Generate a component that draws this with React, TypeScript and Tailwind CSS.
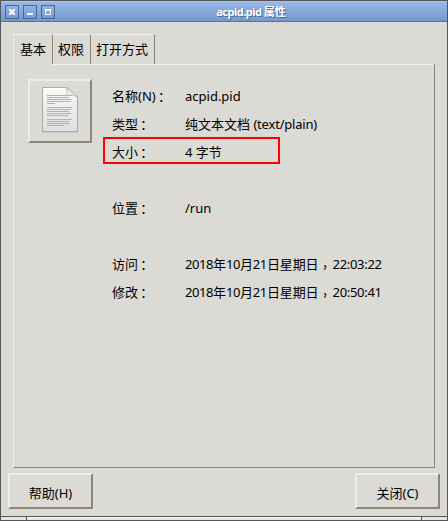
import type { ReactNode } from "react";

const cn = "font-['Noto_Sans','Noto_Sans_CJK_SC',sans-serif]";

function TitleButton({ children }: { children: ReactNode }) {
  return (
    <button className="flex h-[14px] w-[14px] items-center justify-center border border-[#46699a] bg-gradient-to-b from-[#94b4e2] to-[#7599cf]">
      <svg width="8" height="8" viewBox="0 0 8 8" fill="#f4f7fb" shapeRendering="crispEdges">
        {children}
      </svg>
    </button>
  );
}

function Row({ label, children }: { label: string; children?: ReactNode }) {
  return (
    <div className="flex h-7 items-center whitespace-nowrap">
      <span className="w-[73px] shrink-0">
        {label}
        {label && (
          <span lang="zh-TW" className="-ml-px inline-block translate-y-px font-['Noto_Sans_CJK_TC',sans-serif] leading-none">：</span>
        )}
      </span>
      <span>{children}</span>
    </div>
  );
}

function Stamp({ date, time }: { date: string; time: string }) {
  return (
    <span className="tracking-[-0.43px]">
      {date.split(/(\d+)/).map((part, i) => (
        <span key={i} className={i % 2 ? "" : "tracking-[-0.1px]"}>{part}</span>
      ))}
      <span lang="zh-TW" className="mr-px inline-block translate-y-[3px] font-['Noto_Sans_CJK_TC',sans-serif] leading-none tracking-normal">，</span>
      <span className="tracking-[-0.3px]">{time}</span>
    </span>
  );
}

function Raised({ className, children }: { className: string; children: ReactNode }) {
  return (
    <button
      className={`flex items-center justify-center border-2 border-t-[#edede9] border-l-[#edede9] border-r-[#8a8678] border-b-[#8a8678] ${className}`}
    >
      {children}
    </button>
  );
}

function DocumentIcon() {
  const lines = [
    [8, 25], [10, 22], [12, 25], [14, 24], [16, 8],
    [20, 25], [22, 24], [24, 22], [26, 24], [28, 21],
    [32, 25], [34, 22], [36, 23], [38, 17],
  ];
  return (
    <svg width="38" height="48" viewBox="0 0 38 48">
      <defs>
        <linearGradient id="paper" x1="0" y1="0" x2="0" y2="1">
          <stop offset="0" stopColor="#fafafa" />
          <stop offset="1" stopColor="#dedede" />
        </linearGradient>
        <linearGradient id="fold" x1="0" y1="1" x2="1" y2="0">
          <stop offset="0" stopColor="#c8c8c8" />
          <stop offset="0.3" stopColor="#ffffff" />
          <stop offset="0.55" stopColor="#d0d0d0" />
        </linearGradient>
      </defs>
      <path d="M.5 45.2H37.5" stroke="#c6c6c1" strokeWidth="1" />
      <path d="M1.5 .5H25.5L36.5 10V44.5H1.5Z" fill="url(#paper)" stroke="#aaaaaa" />
      <path d="M2.5 1.5H24" stroke="#fff" />
      <g fill="#b2b2b2">
        {lines.map(([y, w]) => (
          <rect key={y} x="6" y={y} width={w} height="1" />
        ))}
      </g>
      <path d="M24.5 .5C26.5 3 26.5 6 25.5 8.5C29 7.6 33 8 36.5 10C34 6 29 1.5 24.5 .5Z" fill="url(#fold)" stroke="#b5b5b5" strokeWidth=".8" />
    </svg>
  );
}

export default function App() {
  return (
    <div className={`flex h-[521px] w-[448px] flex-col overflow-hidden border border-[#55565a] bg-[#dbdad5] text-[13px] leading-[18px] text-black ${cn}`}>
      <header className="relative flex h-[21px] shrink-0 items-center gap-1 border-t border-b border-t-[#a9c3ea] border-b-[#4e74a8] bg-gradient-to-b from-[#98b8e6] to-[#7599cc] pl-1">
        <TitleButton>
          <path d="M1 1h2v1h2V1h2v2H6v2h1v2H5V6H3v1H1V5h1V3H1z" />
        </TitleButton>
        <TitleButton>
          <path d="M1 5h6v2H1z" />
        </TitleButton>
        <TitleButton>
          <path fillRule="evenodd" d="M1 1h6v6H1zM2 3v3h4V3z" />
        </TitleButton>
        <h1 className="absolute inset-x-0 top-0 pl-[54px] text-center text-[11px] leading-[19px] font-bold text-white [text-shadow:1px_1px_0_#48689a]">
          <span className="tracking-[-0.5px]">acpid.pid </span>属性
        </h1>
      </header>

      <nav className="mt-3 ml-3 flex h-[30px] shrink-0">
        <div className="w-10 border-t border-r border-l border-t-[#efefeb] border-r-[#8a8678] border-l-[#efefeb] pt-[5px] pl-[6px]">基本</div>
        <div className="w-[38px] border-t border-r border-t-[#efefeb] border-r-[#8a8678] pt-[5px] pl-[5px]">权限</div>
        <div className="w-16 border-t border-r border-t-[#efefeb] border-r-[#8a8678] pt-[5px] pl-[5px]">打开方式</div>
      </nav>

      <main className="mx-3 h-[404px] w-[422px] shrink-0 border-r border-b border-l border-r-[#8a8678] border-b-[#8a8678] border-l-[#efefeb]">
        <div className="ml-[38px] h-px bg-[#efefeb]" />
        <div className="flex">
          <Raised className="mt-[14px] ml-[14px] h-16 w-16">
            <DocumentIcon />
          </Raised>
          <div className="relative mt-[17px] ml-5">
            <Row label="名称(N)">acpid.pid</Row>
            <Row label="类型">纯文本文档 <span className="tracking-[-0.2px]">(text/plain)</span></Row>
            <Row label="大小">4 字节</Row>
            <Row label="" />
            <Row label="位置">/run</Row>
            <Row label="" />
            <Row label="访问"><Stamp date="2018年10月21日星期日" time="22:03:22" /></Row>
            <Row label="修改"><Stamp date="2018年10月21日星期日" time="20:50:41" /></Row>
            <div className="absolute top-[55px] -left-[9px] h-[27px] w-[177px] border-2 border-[#ff0000]" />
          </div>
        </div>
      </main>

      <footer className="flex justify-between pt-[5px] pr-[7px] pl-[7px]">
        <Raised className="h-9 w-[85px] pt-[4px]">帮助(H)</Raised>
        <Raised className="h-9 w-[85px] pt-[4px]">关闭(C)</Raised>
      </footer>
      <div className="mt-auto flex h-1 shrink-0 border-t border-[#55565a] bg-[#e6e6e4]">
        <div className="w-[26px] border-r border-[#55565a]" />
        <div className="flex-1 border-t border-[#f8f8f7]" />
        <div className="w-[26px] border-l border-[#55565a]" />
      </div>
    </div>
  );
}
